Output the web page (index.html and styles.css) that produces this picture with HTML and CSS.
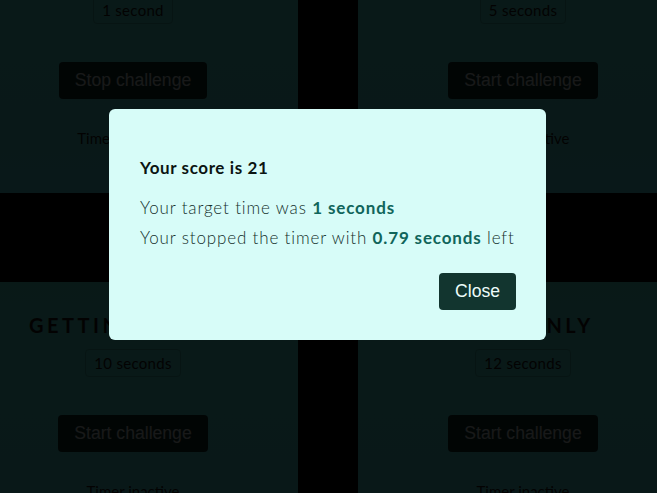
FILE: index.html
```html
<!DOCTYPE html>
<html lang="en">
<head>
<meta charset="utf-8">
<title>The Almost Final Countdown</title>
<link rel="stylesheet" href="styles.css">
</head>
<body>
<div id="challenges">
  <section class="challenge">
    <h2>Easy</h2>
    <p class="challenge-time">1 second</p>
    <button class="challenge-btn">Stop challenge</button>
    <p class="status">Time is running...</p>
  </section>
  <section class="challenge">
    <h2>Not easy</h2>
    <p class="challenge-time">5 seconds</p>
    <button class="challenge-btn">Start challenge</button>
    <p class="status">Timer inactive</p>
  </section>
  <section class="challenge">
    <h2>Getting tough</h2>
    <p class="challenge-time">10 seconds</p>
    <button class="challenge-btn">Start challenge</button>
    <p class="status">Timer inactive</p>
  </section>
  <section class="challenge">
    <h2>Pros only</h2>
    <p class="challenge-time">12 seconds</p>
    <button class="challenge-btn">Start challenge</button>
    <p class="status">Timer inactive</p>
  </section>
</div>
<div class="backdrop"></div>
<div class="result-modal" role="dialog">
  <h2>Your score is 21</h2>
  <p>Your target time was <strong>1 seconds</strong></p>
  <p>Your stopped the timer with <strong>0.79 seconds</strong> left</p>
  <form class="modal-actions">
    <button type="button" class="close-btn">Close</button>
  </form>
</div>
</body>
</html>
```

FILE: styles.css
```css
html, body {
  margin: 0;
  padding: 0;
  background: #000;
  overflow: hidden;
  height: 100%;
}

body {
  font-family: Lato, "Noto Sans", sans-serif;
}

#challenges {
  display: grid;
  grid-template-columns: 330px 330px;
  column-gap: 60px;
  row-gap: 89px;
  width: 720px;
  margin: -71px 0 0 -32px;
}

.challenge {
  display: flex;
  flex-direction: column;
  align-items: center;
  padding: 31px 0 45px;
  background: linear-gradient(#5cfaec, #5cf4f8);
  color: #221c18;
}

.challenge h2 {
  margin: 0;
  font-size: 20px;
  line-height: 24px;
  font-weight: 700;
  letter-spacing: 3.5px;
  text-transform: uppercase;
  color: #221c18;
}

.challenge-time {
  margin: 12px 0 0;
  padding: 4px 8px;
  border: 1px solid #46cebe;
  border-radius: 4px;
  font-size: 15px;
  line-height: 18px;
  letter-spacing: 0.3px;
}

.challenge-btn {
  margin-top: 38px;
  padding: 8px 16px;
  border: none;
  border-radius: 4px;
  background: #12352f;
  color: #edfcfa;
  font-family: "Liberation Sans", Arial, sans-serif;
  font-size: 17.6px;
}

.status {
  margin: 29px 0 0;
  font-size: 15px;
  line-height: 20px;
}

.backdrop {
  position: fixed;
  inset: 0;
  background: rgba(0, 0, 0, 0.9);
}

.result-modal {
  position: fixed;
  top: 109px;
  left: 109px;
  width: 437px;
  box-sizing: border-box;
  padding: 30px 30px 30px 31px;
  border-radius: 6px;
  background: #d7fcf8;
  color: #14302c;
}

.result-modal h2 {
  margin: 19px 0 0;
  font-size: 17px;
  line-height: 20px;
  font-weight: 700;
  letter-spacing: 0.6px;
  color: #0b1412;
}

.result-modal p {
  margin: 20px 0 0;
  font-size: 17px;
  line-height: 20px;
  font-weight: 300;
  letter-spacing: 0.85px;
}

.result-modal p + p {
  margin-top: 10px;
}

.result-modal strong {
  color: #10655b;
  font-weight: 700;
}

.modal-actions {
  display: flex;
  justify-content: flex-end;
  margin: 24.6px 0 0;
}

.close-btn {
  padding: 8px 16px;
  border: none;
  border-radius: 4px;
  background: #12352f;
  color: #edfcfa;
  font-family: "Liberation Sans", Arial, sans-serif;
  font-size: 17.6px;
}
```
